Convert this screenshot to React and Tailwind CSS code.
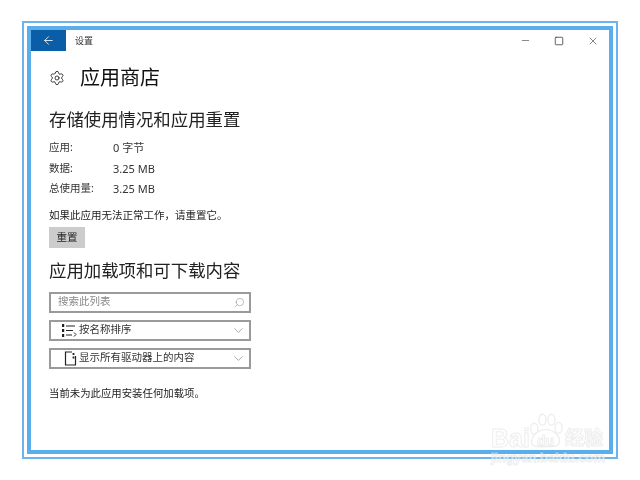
import { ArrowLeft, ChevronDown, Minus, Search, Settings, Square, X } from 'lucide-react';

const cjk = "font-['Noto_Sans','Noto_Sans_CJK_SC',sans-serif]";

function InfoRow({ label, value }) {
  return (
    <div className="flex h-[20.5px] items-center text-[10.5px] text-[#333]">
      <span className="w-16">{label}</span>
      <span className="text-[11px]">{value}</span>
    </div>
  );
}

function SelectBox({ icon, label }) {
  return (
    <div className="flex h-[21px] w-[202px] items-center border-2 border-[#9a9a9a] pr-[3px] text-[10.5px] text-[#333]">
      <span className="flex w-[27px] justify-end pr-[1px]">{icon}</span>
      <span className="flex-1 pl-[1px]">{label}</span>
      <ChevronDown size={15} strokeWidth={1} className="text-[#777]" />
    </div>
  );
}

function SortIcon() {
  return (
    <svg width="15" height="13" viewBox="0 0 15 13" fill="none" stroke="#222">
      <path d="M1 0v3M1 5v3M1 10v3" strokeWidth="2.4" />
      <path d="M4 2h9M4 6.5h7M4 11h6M12 8.5l2 2-2 2" strokeWidth="1" />
    </svg>
  );
}

function DriveIcon() {
  return (
    <svg width="13" height="15" viewBox="0 0 13 15" fill="none" stroke="#222" strokeWidth="1.2">
      <path d="M8 1H1.5v13h10V5" />
      <path d="M9.5 2v2M9.5 5.5v2" strokeWidth="1.8" />
    </svg>
  );
}

function Watermark() {
  return (
    <div className="pointer-events-none absolute left-[491px] top-[412px] h-[56px] w-[116px] text-white opacity-60 [-webkit-text-stroke:1px_#e2e2e2]">
      <svg width="36" height="37" viewBox="0 0 40 38" className="absolute left-[37px] top-0" fill="#fff" stroke="#e2e2e2" strokeWidth="1.5">
        <ellipse cx="7" cy="17" rx="4" ry="6" />
        <ellipse cx="16" cy="7" rx="4" ry="6" />
        <ellipse cx="26" cy="7" rx="4" ry="6" />
        <ellipse cx="34" cy="16" rx="4" ry="6" />
        <path d="M4 32c0-8 8-14 16-14s15 6 15 13c0 6-7 6-15 6S4 38 4 32z" />
      </svg>
      <span className="absolute left-0 top-[14px] font-['Liberation_Sans',sans-serif] text-[25px] font-bold leading-none">Bai</span>
      <span className="absolute left-[46px] top-[22px] font-['Liberation_Sans',sans-serif] text-[14px] font-bold leading-none">du</span>
      <span className={`absolute left-[74px] top-[17px] text-[19px] font-bold leading-none ${cjk}`}>经验</span>
      <span className="absolute left-0 top-[39px] font-['Liberation_Sans',sans-serif] text-[13px] font-bold leading-none">jingyan.baidu.com</span>
    </div>
  );
}

export default function App() {
  return (
    <div className={`relative h-[480px] w-[640px] overflow-hidden bg-white pl-[22px] pt-[21px] blur-[0.4px] ${cjk}`}>
      <div className="h-[438px] w-[596px] border-2 border-[#6db3ee] p-[3px]">
        <div className="h-[428px] w-[586px] border-[4px] border-[#5aaeec] bg-white">
          {/* Title bar */}
          <div className="flex h-[21px] items-center text-[#333]">
            <div className="flex h-[21px] w-[35px] items-center justify-center bg-[#0a5ea8]">
              <ArrowLeft size={13} strokeWidth={1.5} className="text-white" />
            </div>
            <span className="ml-[9px] flex-1 text-[9px]">设置</span>
            <div className="flex items-center">
              <Minus size={11} strokeWidth={1.5} className="mr-[23px] text-[#555]" />
              <Square size={10} strokeWidth={2} className="mr-[23px] text-[#444]" />
              <X size={12} strokeWidth={1.3} className="mr-[10px] text-[#444]" />
            </div>
          </div>

          <div className="pl-[18px]">
            <div className="mt-[17px] flex h-[20px] items-center">
              <Settings size={16} strokeWidth={1.3} className="text-[#222]" />
              <span className="ml-[15px] text-[20px] leading-none text-[#111]">应用商店</span>
            </div>

            <h2 className="mt-[19px] h-[24px] text-[17.4px] leading-[24px] text-[#222]">存储使用情况和应用重置</h2>

            <div className="mt-[7px]">
              <InfoRow label="应用:" value="0 字节" />
              <InfoRow label="数据:" value="3.25 MB" />
              <InfoRow label="总使用量:" value="3.25 MB" />
            </div>

            <p className="mt-[7px] text-[10.5px] leading-[16px] text-[#222]">如果此应用无法正常工作，请重置它。</p>

            <button className="mt-[4px] block h-[21px] w-[36px] bg-[#cccccc] pt-[2px] text-[10.5px] text-[#222]">重置</button>

            <h2 className="mt-[10px] h-[24px] text-[17.4px] leading-[24px] text-[#222]">应用加载项和可下载内容</h2>

            <div className="mt-[10px] flex h-[21px] w-[202px] items-center justify-between border-2 border-[#9a9a9a] pl-[7px] pr-[4px] text-[10.5px] text-[#888]">
              <span>搜索此列表</span>
              <Search size={11} strokeWidth={1} className="-scale-x-100 text-[#777]" />
            </div>

            <div className="mt-[7px] flex flex-col gap-[7px]">
              <SelectBox icon={<SortIcon />} label="按名称排序" />
              <SelectBox icon={<DriveIcon />} label="显示所有驱动器上的内容" />
            </div>

            <p className="mt-[16px] text-[10.4px] leading-[16px] text-[#222]">当前未为此应用安装任何加载项。</p>
          </div>
        </div>
      </div>
      <Watermark />
    </div>
  );
}
